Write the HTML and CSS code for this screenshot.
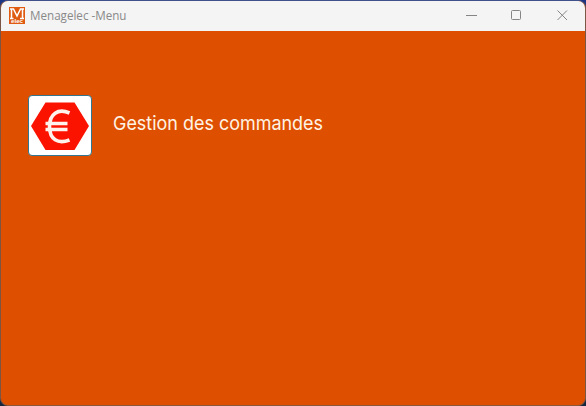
FILE: index.html
```html
<!DOCTYPE html>
<html lang="fr">
<head>
<meta charset="utf-8">
<title>Menagelec -Menu</title>
<link rel="stylesheet" href="styles.css">
</head>
<body>
<div class="window">
  <header class="titlebar">
    <svg class="logo" width="16" height="17" viewBox="0 0 16 17">
      <path class="mark" d="M2.500 12V2H4.500L8 9L11.500 2H13.500V12M1 11.500H4.500M11 11.500H15M1 2H4M12 2H15"/>
      <text class="logo-sub" x="2" y="16" textLength="12" lengthAdjust="spacingAndGlyphs">elec</text>
    </svg>
    <svg class="title" width="100" height="20"><text x="0" y="14" textLength="96.5" lengthAdjust="spacingAndGlyphs">Menagelec -Menu</text></svg>
    <svg class="controls" width="135" height="29" viewBox="0 0 135 29">
      <path d="M15 14.500h11"/>
      <rect x="60.500" y="9.500" width="9" height="9" rx="1"/>
      <path d="M106.500 9.500l9.500 9.500M116 9.500l-9.500 9.500"/>
    </svg>
  </header>
  <main class="content">
    <button class="euro-button" aria-label="Gestion des commandes">
      <svg width="62" height="59" viewBox="0 0 62 59">
        <path class="hex" d="M2 30L16.500 6.500H45.500L60 30L45.500 54H16.500Z"/>
        <path class="euro" d="M40.500 17C29 12 20.500 18 20.500 30.500C20.500 43.500 29 48.500 40.500 44M16.500 27.500H38.500M16.500 33.500H38.500"/>
      </svg>
    </button>
    <svg class="label" width="215" height="30"><text x="0" y="21" textLength="210" lengthAdjust="spacingAndGlyphs">Gestion des commandes</text></svg>
  </main>
</div>
</body>
</html>
```

FILE: styles.css
```css
* { box-sizing: border-box; }

body {
  margin: 0;
  height: 406px;
  overflow: hidden;
  background: linear-gradient(#1b3585 0, #18377f 30px, #5b5148 60px, #5b5148 380px, #17263f 400px);
}

.window {
  height: 406px;
  border: 1px solid #49516f;
  border-color: #40508a #7c5644 #8c583b #7c5644;
  border-radius: 8px;
  overflow: hidden;
  background: #de5000;
}

.titlebar {
  display: flex;
  align-items: flex-start;
  height: 30px;
  padding-left: 8px;
  background: #f4f4f4;
}

.logo {
  margin-top: 6px;
  background: #df5b12;
}

.mark {
  fill: none;
  stroke: #fff;
  stroke-width: 1.5;
}

.logo-sub {
  fill: #fff;
  font: bold 5px "Liberation Sans", sans-serif;
}

.title {
  margin: 5px auto 0 5px;
  overflow: visible;
  fill: #898989;
  font: 12px "Open Sans", sans-serif;
}

.controls {
  margin-right: -1px;
  fill: none;
  stroke: #858585;
  stroke-width: 1;
}

.content {
  display: flex;
  align-items: flex-start;
  gap: 21px;
  padding: 64px 0 0 27px;
}

.euro-button {
  display: block;
  width: 64px;
  height: 61px;
  padding: 0;
  border: 1px solid #32768f;
  border-radius: 4px;
  background: #fff;
}

.euro-button svg { display: block; }

.hex { fill: #fb1300; }

.euro {
  fill: none;
  stroke: #fff2ec;
  stroke-width: 3.6;
}

.label {
  margin-top: 14px;
  overflow: visible;
  fill: #fff3e5;
  font: 19px Inter, "Liberation Sans", sans-serif;
}
```
